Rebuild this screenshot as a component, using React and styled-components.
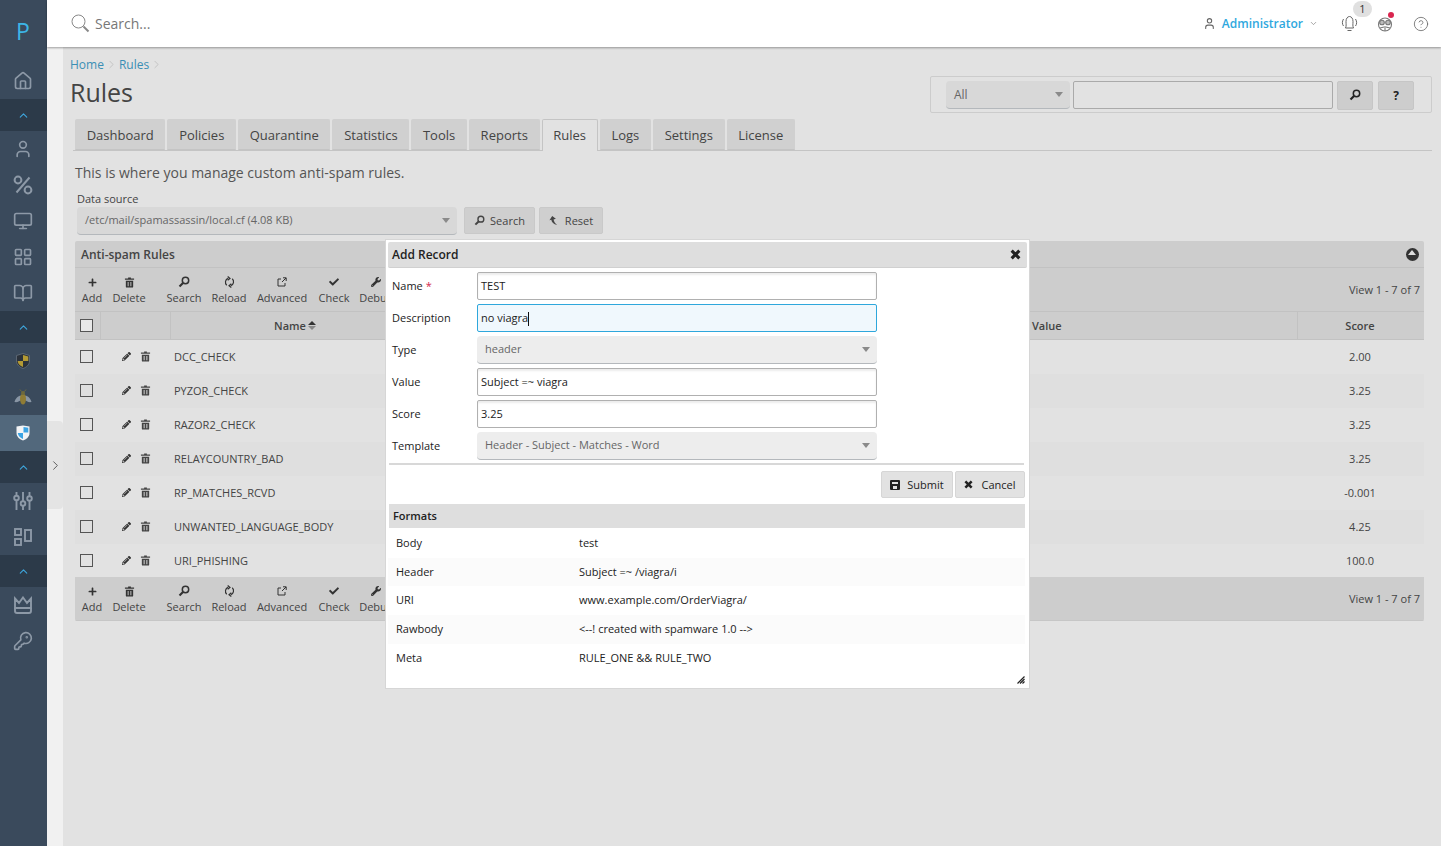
import React from "react";
import styled, { createGlobalStyle } from "styled-components";
import { Home, User, Monitor, LayoutGrid, BookOpen, KeyRound, ChevronUp, ChevronRight, ChevronDown, CircleHelp } from "lucide-react";
import { FaPlus, FaCheck, FaWrench, FaPencilAlt } from "react-icons/fa";

const GlobalStyle = createGlobalStyle`
  html, body { margin: 0; padding: 0; height: 100%; background: #e2e2e2; }
  body { font-family: "Open Sans", sans-serif; font-size: 11px; color: #333; overflow: hidden; }
  * { box-sizing: border-box; }
`;

const Page = styled.div`
  display: grid;
  grid-template-columns: 47px 16px 1fr;
  grid-template-rows: 47px 1fr;
  width: 1441px;
  height: 846px;
  position: relative;
  overflow: hidden;
`;

const Sidebar = styled.nav`
  grid-row: 1 / 3;
  background: #3a4a5c;
  display: flex;
  flex-direction: column;
`;

const Logo = styled.div`
  height: 63px;
  padding-top: 15px;
  padding-right: 1px;
  text-align: center;
  font-size: 23px;
  line-height: 32px;
  color: #3cb5e6;
`;

const SideItem = styled.div`
  height: 36px;
  padding-right: 1px;
  display: flex;
  align-items: center;
  justify-content: center;
  color: #8d99a7;
  background: ${(p) => (p.$active ? "#52687c" : "transparent")};
`;

const SideBand = styled.div`
  height: 32px;
  padding-right: 1px;
  display: flex;
  align-items: center;
  justify-content: center;
  background: #2c3a49;
  color: #3ea6dc;
`;

const TopBar = styled.header`
  grid-column: 2 / 4;
  background: #fff;
  box-shadow: 0 1px 2px rgba(0, 0, 0, 0.35);
  display: flex;
  align-items: center;
  padding: 0 12px 0 24px;
  z-index: 2;
`;

const SearchHint = styled.span`
  margin-left: 5px;
  font-size: 14px;
  color: #777;
  flex: 1;
`;

const UserLink = styled.span`
  display: flex;
  align-items: center;
  gap: 6px;
  margin-right: 23px;
  font-size: 12px;
  font-weight: 600;
  color: #2fa8de;
  & > svg:first-child { color: #666; }
  & > svg:last-child { color: #888; }
`;

const HeadIcon = styled.span`
  position: relative;
  display: flex;
  margin-left: ${(p) => p.$gap || 0}px;
  color: #666;
`;

const CountBadge = styled.span`
  position: absolute;
  left: 12px;
  top: -14px;
  width: 19px;
  height: 16px;
  border-radius: 8px;
  background: #e0e0e0;
  color: #333;
  font-size: 11px;
  line-height: 16px;
  text-align: center;
`;

const RedDot = styled.span`
  position: absolute;
  right: -1px;
  top: -4px;
  width: 6px;
  height: 6px;
  border-radius: 50%;
  background: #d9264f;
`;

const Rail = styled.div`
  background: #f1f1f1;
  padding-top: 374px;
`;

const RailTab = styled.div`
  height: 88px;
  background: #e4e4e4;
  border-radius: 0 4px 4px 0;
  display: flex;
  align-items: center;
  justify-content: center;
  color: #555;
`;

const Main = styled.main`
  background: #e2e2e2;
  padding: 9px 9px 0 7px;
  min-width: 0;
`;

const Crumbs = styled.div`
  display: flex;
  align-items: center;
  gap: 1px;
  height: 17px;
  font-size: 12px;
  color: #3a8fb5;
  & svg { color: #aaa; }
`;

const TitleRow = styled.div`
  display: flex;
  justify-content: space-between;
  align-items: flex-start;
  height: 43px;
  margin-top: 3px;
`;

const Title = styled.h1`
  margin: -1px 0 0;
  font-size: 25px;
  font-weight: 400;
  line-height: 34px;
  color: #444;
`;

const FilterBox = styled.div`
  display: flex;
  align-items: center;
  width: 502px;
  height: 37px;
  padding: 1px 0 0 15px;
  border: 1px solid #ccc;
  border-radius: 2px;
`;

const Select = styled.div`
  position: relative;
  width: ${(p) => p.$w}px;
  height: 28px;
  padding-left: ${(p) => p.$pad || 8}px;
  border-radius: 4px;
  background: ${(p) => p.$bg || "#d8d8d8"};
  border-bottom: 1px solid #b4b8bc;
  font-size: ${(p) => p.$size || 11}px;
  line-height: ${(p) => p.$lh || 26}px;
  color: #666;
  &::after {
    content: "";
    position: absolute;
    right: 7px;
    top: 11px;
    border: 4px solid transparent;
    border-top: 5px solid #8a8a8a;
  }
`;

const FilterInput = styled.div`
  width: 260px;
  height: 28px;
  margin: 0 4px 0 3px;
  border: 1px solid #aaa;
  border-radius: 2px;
  background: #e2e2e2;
`;

const SquareButton = styled.div`
  width: 36px;
  height: 29px;
  margin-left: ${(p) => p.$gap || 0}px;
  display: flex;
  align-items: center;
  justify-content: center;
  border-radius: 2px;
  background: #cdcdcd;
  border: 1px solid #c6c6c6;
  color: #222;
  font-size: 12px;
  font-weight: 700;
`;

const Tabs = styled.div`
  display: flex;
  gap: 2px;
  height: 32px;
  margin-left: 3px;
  padding-left: 2px;
  border-bottom: 1px solid #c4c4c4;
`;

const Tab = styled.div`
  height: ${(p) => (p.$active ? 32 : 31)}px;
  padding: 0 10.7px;
  border-radius: 2px 2px 0 0;
  background: ${(p) => (p.$active ? "#e2e2e2" : "#d0d0d0")};
  border: 1px solid ${(p) => (p.$active ? "#c4c4c4" : "#d0d0d0")};
  border-bottom: ${(p) => (p.$active ? "none" : "1px solid #c4c4c4")};
  font-size: 13px;
  line-height: 31px;
  color: #444;
`;

const Intro = styled.p`
  margin: 12px 0 0 5px;
  font-size: 14px;
  line-height: 20px;
  color: #555;
`;

const FieldLabel = styled.div`
  margin: 8px 0 0 7px;
  font-size: 11px;
  line-height: 15px;
  color: #444;
`;

const SourceRow = styled.div`
  display: flex;
  align-items: center;
  margin: 0 0 6px 7px;
  height: 29px;
`;

const PlainButton = styled.div`
  display: flex;
  align-items: center;
  justify-content: center;
  gap: ${(p) => p.$iconGap || 5}px;
  width: ${(p) => p.$w}px;
  height: 27px;
  margin-left: ${(p) => p.$gap || 0}px;
  border-radius: 2px;
  background: ${(p) => p.$bg || "#cfcfcf"};
  border: 1px solid ${(p) => p.$line || "#c9c9c9"};
  font-size: 11px;
  color: ${(p) => p.$color || "#444"};
`;

const Panel = styled.section`
  width: 1349px;
  margin-left: 5px;
  border-radius: 2px;
  background: #e2e2e2;
  overflow: hidden;
`;

const PanelTitle = styled.div`
  display: flex;
  align-items: center;
  justify-content: space-between;
  height: 27px;
  padding: 0 5px 0 6px;
  background: #cdcdcd;
  border-bottom: 1px solid #c2c2c2;
  font-size: 12px;
  font-weight: 600;
  color: #444;
`;

const CollapseDot = styled.span`
  width: 13px;
  height: 13px;
  border-radius: 50%;
  background: #333;
  position: relative;
  &::after {
    content: "";
    position: absolute;
    left: 2px;
    top: 2px;
    border: 4.5px solid transparent;
    border-top: 0;
    border-bottom: 5px solid #ddd;
  }
`;

const Toolbar = styled.div`
  display: flex;
  align-items: center;
  height: 44px;
  padding-left: 2px;
  background: #cdcdcd;
  border-bottom: 1px solid ${(p) => (p.$bottom ? "#c6c6c6" : "#c2c2c2")};
`;

const ToolButton = styled.div`
  width: ${(p) => p.$w}px;
  margin-left: ${(p) => p.$gap || 0}px;
  margin-top: 2px;
  display: flex;
  flex-direction: column;
  align-items: center;
  gap: 3px;
  font-size: 11px;
  line-height: 14px;
  color: #444;
  white-space: nowrap;
`;

const ToolIcon = styled.span`
  display: flex;
  align-items: center;
  justify-content: center;
  height: 12px;
  color: #333;
`;

const PageInfo = styled.span`
  margin-left: auto;
  padding-right: 4px;
  font-size: 11px;
  color: #444;
`;

const Grid = styled.div`
  display: grid;
  grid-template-columns: 26px 70px 248px 609px 270px 126px;
  height: ${(p) => p.$h}px;
  padding-bottom: ${(p) => (p.$head ? 0 : p.$h === 33 ? 1 : 2)}px;
  background: ${(p) => (p.$head ? "#cdcdcd" : p.$odd ? "#dfdfdf" : "#e2e2e2")};
  border-bottom: ${(p) => (p.$head ? "1px solid #c2c2c2" : "none")};
`;

const Cell = styled.div`
  display: flex;
  align-items: center;
  justify-content: ${(p) => p.$align || "flex-start"};
  gap: ${(p) => p.$iconGap || 0}px;
  padding: ${(p) => p.$pad || "0"};
  border-right: ${(p) => (p.$line ? "1px solid #c2c2c2" : "none")};
  font-size: 11px;
  font-weight: ${(p) => (p.$head ? 600 : 400)};
  color: #444;
`;

const SortMark = styled.span`
  display: inline-flex;
  flex-direction: column;
  gap: 1px;
  margin-left: 2px;
  &::before, &::after {
    content: "";
    border: 4px solid transparent;
  }
  &::before { border-top: 0; border-bottom: 4px solid #333; }
  &::after { border-bottom: 0; border-top: 4px solid #888; }
`;

const Check = styled.span`
  width: 13px;
  height: 13px;
  margin-left: 5px;
  border: 1px solid #555;
  background: ${(p) => (p.$fill ? "#e8e8e8" : "transparent")};
`;

const Modal = styled.div`
  position: absolute;
  left: 385px;
  top: 239px;
  width: 645px;
  height: 450px;
  padding: 2px;
  background: #fff;
  border: 1px solid #d6d6d6;
`;

const ModalTitle = styled.div`
  display: flex;
  align-items: center;
  justify-content: space-between;
  height: 26px;
  padding: 0 6px 0 4px;
  border-radius: 2px;
  background: #dedede;
  border-bottom: 1px solid #d0d0d0;
  font-size: 12px;
  font-weight: 600;
  color: #222;
`;

const FormBody = styled.div`
  display: flex;
  flex-direction: column;
  gap: 4px;
  padding: 4px 0 0 4px;
`;

const FormRow = styled.div`
  display: flex;
  align-items: center;
  height: 28px;
`;

const FormLabel = styled.label`
  width: 85px;
  padding-bottom: 2px;
  font-size: 11px;
  color: #222;
  & em { font-style: normal; color: #d2274f; }
`;

const TextBox = styled.div`
  width: 400px;
  height: 28px;
  padding: 0 3px;
  border: 1px solid ${(p) => (p.$focus ? "#2ea7dc" : "#b0b0b0")};
  border-radius: 2px;
  background: ${(p) => (p.$focus ? "#f0f8fd" : "#fff")};
  box-shadow: inset 0 2px 2px rgba(0, 0, 0, ${(p) => (p.$focus ? 0 : 0.08)});
  font-size: 11px;
  line-height: 26px;
  color: #222;
`;

const Caret = styled.span`
  display: inline-block;
  width: 1px;
  height: 14px;
  vertical-align: middle;
  background: #111;
`;

const Divider = styled.div`
  height: 2px;
  margin: 3px 3px 0 1px;
  background: #d8d8d8;
`;

const ModalActions = styled.div`
  display: flex;
  justify-content: flex-end;
  gap: 2px;
  margin-top: 6px;
  padding-right: 2px;
`;

const FormatsHead = styled.div`
  height: 24px;
  margin: 6px 2px 1px 1px;
  padding-left: 4px;
  background: #dedede;
  font-size: 11px;
  font-weight: 600;
  line-height: 24px;
  color: #222;
`;

const FormatRow = styled.div`
  display: grid;
  grid-template-columns: 191px 1fr;
  height: 28.7px;
  margin-right: 2px;
  background: ${(p) => (p.$alt ? "#fbfbfb" : "#fff")};
  font-size: 11px;
  line-height: 28.7px;
  color: #222;
  & > span:first-child { padding-left: 8px; }
`;

const Resizer = styled.svg`
  position: absolute;
  right: 4px;
  bottom: 4px;
`;

// small glyphs that the icon packages don't have in this shape
const Glass = ({ size = 12 }) => (
  <svg width={size} height={size} viewBox="0 0 12 12" fill="none" stroke="currentColor">
    <circle cx="7.5" cy="4.5" r="3.2" strokeWidth="1.5" />
    <path d="M5 7 L1.5 10.5" strokeWidth="2.2" />
  </svg>
);

const HeaderGlass = () => (
  <svg width="19" height="19" viewBox="0 0 19 19" fill="none" stroke="#888">
    <circle cx="7.5" cy="7.5" r="6.5" strokeWidth="1" />
    <path d="M12.5 12.5 L17.5 17.5" strokeWidth="2" />
  </svg>
);

const Trash = ({ size = 11 }) => (
  <svg width={size} height={size} viewBox="0 0 12 12" fill="currentColor">
    <path d="M4.5 0.5h3v1h3.5v1.5h-10v-1.5h3.5zM2 4h8v6.5a1 1 0 0 1-1 1h-6a1 1 0 0 1-1-1zM4 5.5v4.5h1v-4.5zM7 5.5v4.5h1v-4.5z" />
  </svg>
);

const Reload = () => (
  <svg width="11" height="12" viewBox="0 0 12 13" fill="none" stroke="currentColor" strokeWidth="1.3">
    <path d="M3 10 A4.5 4.5 0 0 1 4.5 2.5 M9 3 A4.5 4.5 0 0 1 7.5 10.5" />
    <path d="M4 0.5 L6.5 2.6 L4 4.5 M8 8.5 L5.5 10.5 L8 12.5" />
  </svg>
);

const External = () => (
  <svg width="10" height="10" viewBox="0 0 10 10" fill="none" stroke="currentColor" strokeWidth="1">
    <path d="M4 2H1v7h7V6M5 5l4-4M6 0.8h3.2V4" />
  </svg>
);

const UndoArrow = () => (
  <svg width="11" height="11" viewBox="0 0 12 12" fill="currentColor">
    <path d="M3.5 1 L7.5 4.2 L5 4.8 C5.5 7 6.5 9 9 11 C5 10.5 2.8 8 2.5 5.3 L0.5 5.7z" />
  </svg>
);

const Disk = () => (
  <svg width="10" height="10" viewBox="0 0 10 10" fill="currentColor">
    <path fillRule="evenodd" d="M1 0h8a1 1 0 0 1 1 1v8a1 1 0 0 1-1 1H1a1 1 0 0 1-1-1V1a1 1 0 0 1 1-1zM2 2v2h6V2zM3 6v3h4V6z" />
  </svg>
);

const HeavyX = ({ size = 10 }) => (
  <svg width={size} height={size} viewBox="0 0 10 10" stroke="currentColor" strokeWidth="2.8">
    <path d="M1.5 1.5 L8.5 8.5 M8.5 1.5 L1.5 8.5" />
  </svg>
);

const PercentMark = () => (
  <svg width="20" height="20" viewBox="0 0 20 20" fill="none" stroke="currentColor" strokeWidth="2">
    <circle cx="5" cy="5" r="3.4" />
    <circle cx="15" cy="15" r="3.4" />
    <path d="M16.5 2.5 L3.5 17.5" />
  </svg>
);

const CrownMark = () => (
  <svg width="20" height="18" viewBox="0 0 20 18" fill="none" stroke="currentColor" strokeWidth="1.9">
    <path d="M2 2.5 L6 7 L10 1.5 L14 7 L18 2.5 V12 H2z" />
    <path d="M2 12 V15 Q2 17 4 17 H16 Q18 17 18 15 V12" />
  </svg>
);

const SlidersRings = () => (
  <svg width="20" height="20" viewBox="0 0 20 20" fill="none" stroke="currentColor" strokeWidth="1.9">
    <path d="M3.5 1v3.5M3.5 9.5V19M10 1v9M10 15v4M16.5 1v4M16.5 10v9" />
    <circle cx="3.5" cy="7" r="2.3" />
    <circle cx="10" cy="12.5" r="2.3" />
    <circle cx="16.5" cy="7.5" r="2.3" />
  </svg>
);

const Widgets = () => (
  <svg width="18" height="18" viewBox="0 0 18 18" fill="none" stroke="currentColor" strokeWidth="1.9">
    <rect x="1" y="1" width="6" height="6" />
    <rect x="1" y="11" width="6" height="6" />
    <rect x="11" y="2" width="6" height="11" />
  </svg>
);

const DarkShield = () => (
  <svg width="14" height="16" viewBox="0 0 14 16">
    <path d="M7 0.5 L13.5 2.5 V8 C13.5 12 10 14.5 7 15.5 C4 14.5 0.5 12 0.5 8 V2.5z" fill="#2b323b" stroke="#66717d" strokeWidth="0.8" />
    <path d="M7 2 L12.3 3.5 V8 H7z M7 8 V14 C4.5 13 1.7 11 1.7 8z" fill="#b39a34" />
  </svg>
);

const Bee = () => (
  <svg width="18" height="17" viewBox="0 0 18 17">
    <path d="M8 7 C5 6 1.5 9 0.5 13 C3 13.5 6 12.5 8 10z M10 7 C13 6 16.5 9 17.5 13 C15 13.5 12 12.5 10 10z" fill="#8996a5" />
    <ellipse cx="9" cy="10" rx="3" ry="5.5" fill="#8f7c35" />
    <circle cx="9" cy="4" r="2" fill="#6e6a3c" />
    <path d="M7.5 2.5 L6 0.5 M10.5 2.5 L12 0.5" stroke="#6e6a3c" />
  </svg>
);

const BlueShield = () => (
  <svg width="14" height="16" viewBox="0 0 14 16">
    <path d="M7 0.5 L13.5 1.5 V8 C13.5 12 10 14.5 7 15.5 C4 14.5 0.5 12 0.5 8 V1.5z" fill="#f2f4f6" />
    <path d="M7.5 2 L12.3 2.7 V7.5 H7.5z M7 8 V14 C4.5 13 2 11 1.8 8z" fill="#3ba3e3" />
  </svg>
);

const RingingBell = () => (
  <svg width="17" height="17" viewBox="0 0 17 17" fill="none" stroke="currentColor" strokeWidth="1">
    <path d="M4.5 13 C5.5 11 5 9 5 6.5 C5 3.5 6.5 1.5 8.5 1.5 C10.5 1.5 12 3.5 12 6.5 C12 9 11.5 11 12.5 13z" />
    <path d="M6.5 15.5h4" />
    <path d="M2.5 4 C1 6.5 1 9 2.5 11 M14.5 4 C16 6.5 16 9 14.5 11" />
  </svg>
);

const Mascot = () => (
  <svg width="16" height="16" viewBox="0 0 16 16" fill="none" stroke="#777" strokeWidth="1.1">
    <circle cx="8" cy="8.5" r="6.5" />
    <circle cx="5" cy="6.5" r="2.3" fill="#bbb" />
    <circle cx="11" cy="6.5" r="2.3" fill="#bbb" />
    <path d="M8 10v5M3 12l4-1M13 12l-4-1" />
  </svg>
);

const tabs = ["Dashboard", "Policies", "Quarantine", "Statistics", "Tools", "Reports", "Rules", "Logs", "Settings", "License"];

const rules = [
  { name: "DCC_CHECK", score: "2.00" },
  { name: "PYZOR_CHECK", score: "3.25" },
  { name: "RAZOR2_CHECK", score: "3.25" },
  { name: "RELAYCOUNTRY_BAD", score: "3.25" },
  { name: "RP_MATCHES_RCVD", score: "-0.001" },
  { name: "UNWANTED_LANGUAGE_BODY", score: "4.25" },
  { name: "URI_PHISHING", score: "100.0" },
];

const formats = [
  ["Body", "test"],
  ["Header", "Subject =~ /viagra/i"],
  ["URI", "www.example.com/OrderViagra/"],
  ["Rawbody", "<--! created with spamware 1.0 -->"],
  ["Meta", "RULE_ONE && RULE_TWO"],
];

const ToolButtons = () => (
  <>
    <ToolButton $w={30}><ToolIcon><FaPlus size={9} /></ToolIcon>Add</ToolButton>
    <ToolButton $w={44}><ToolIcon><Trash /></ToolIcon>Delete</ToolButton>
    <ToolButton $w={44} $gap={11}><ToolIcon><Glass /></ToolIcon>Search</ToolButton>
    <ToolButton $w={46}><ToolIcon><Reload /></ToolIcon>Reload</ToolButton>
    <ToolButton $w={60}><ToolIcon><External /></ToolIcon>Advanced</ToolButton>
    <ToolButton $w={44}><ToolIcon><FaCheck size={10} /></ToolIcon>Check</ToolButton>
    <ToolButton $w={40}><ToolIcon><FaWrench size={10} /></ToolIcon>Debug</ToolButton>
  </>
);

const App = () => {
  return (
    <Page>
      <GlobalStyle />
      <Sidebar>
        <Logo>P</Logo>
        <SideItem><Home size={20} strokeWidth={2} /></SideItem>
        <SideBand><ChevronUp size={13} /></SideBand>
        <SideItem><User size={20} strokeWidth={2} /></SideItem>
        <SideItem><PercentMark /></SideItem>
        <SideItem><Monitor size={20} strokeWidth={2} /></SideItem>
        <SideItem><LayoutGrid size={20} strokeWidth={2} /></SideItem>
        <SideItem><BookOpen size={20} strokeWidth={2} /></SideItem>
        <SideBand><ChevronUp size={13} /></SideBand>
        <SideItem><DarkShield /></SideItem>
        <SideItem><Bee /></SideItem>
        <SideItem $active><BlueShield /></SideItem>
        <SideBand><ChevronUp size={13} /></SideBand>
        <SideItem><SlidersRings /></SideItem>
        <SideItem><Widgets /></SideItem>
        <SideBand><ChevronUp size={13} /></SideBand>
        <SideItem><CrownMark /></SideItem>
        <SideItem><KeyRound size={20} strokeWidth={2} /></SideItem>
      </Sidebar>

      <TopBar>
        <HeaderGlass />
        <SearchHint>Search...</SearchHint>
        <UserLink>
          <User size={13} />
          Administrator
          <ChevronDown size={9} />
        </UserLink>
        <HeadIcon>
          <CountBadge>1</CountBadge>
          <RingingBell />
        </HeadIcon>
        <HeadIcon $gap={19}>
          <Mascot />
          <RedDot />
        </HeadIcon>
        <HeadIcon $gap={20}>
          <CircleHelp size={16} strokeWidth={1.2} />
        </HeadIcon>
      </TopBar>

      <Rail>
        <RailTab><ChevronRight size={15} strokeWidth={1.5} /></RailTab>
      </Rail>

      <Main>
        <Crumbs>
          Home <ChevronRight size={13} strokeWidth={1} /> Rules <ChevronRight size={13} strokeWidth={1} />
        </Crumbs>
        <TitleRow>
          <Title>Rules</Title>
          <FilterBox>
            <Select $w={124} $size={12} $lh={28}>All</Select>
            <FilterInput />
            <SquareButton><Glass /></SquareButton>
            <SquareButton $gap={5}>?</SquareButton>
          </FilterBox>
        </TitleRow>
        <Tabs>
          {tabs.map((t) => (
            <Tab key={t} $active={t === "Rules"}>{t}</Tab>
          ))}
        </Tabs>
        <Intro>This is where you manage custom anti-spam rules.</Intro>
        <FieldLabel>Data source</FieldLabel>
        <SourceRow>
          <Select $w={380}>/etc/mail/spamassassin/local.cf (4.08 KB)</Select>
          <PlainButton $w={71} $gap={7}><Glass size={11} /> Search</PlainButton>
          <PlainButton $w={64} $gap={4}><UndoArrow /> Reset</PlainButton>
        </SourceRow>

        <Panel>
          <PanelTitle>Anti-spam Rules <CollapseDot /></PanelTitle>
          <Toolbar>
            <ToolButtons />
            <PageInfo>View 1 - 7 of 7</PageInfo>
          </Toolbar>
          <Grid $head $h={28}>
            <Cell $line><Check $fill /></Cell>
            <Cell $line />
            <Cell $head $align="center">Name<SortMark /></Cell>
            <Cell $head />
            <Cell $head $line $pad="0 0 0 4px">Value</Cell>
            <Cell $head $align="center" $pad="0 2px 0 0">Score</Cell>
          </Grid>
          {rules.map((r, i) => (
            <Grid key={r.name} $h={i === 6 ? 33 : 34} $odd={i % 2 === 1}>
              <Cell><Check /></Cell>
              <Cell $align="center" $iconGap={9}>
                <FaPencilAlt size={9} color="#333" />
                <Trash />
              </Cell>
              <Cell $pad="0 0 0 3px">{r.name}</Cell>
              <Cell />
              <Cell />
              <Cell $align="center" $pad="0 2px 0 0">{r.score}</Cell>
            </Grid>
          ))}
          <Toolbar $bottom>
            <ToolButtons />
            <PageInfo>View 1 - 7 of 7</PageInfo>
          </Toolbar>
        </Panel>
      </Main>

      <Modal>
        <ModalTitle>Add Record <HeavyX size={11} /></ModalTitle>
        <FormBody>
          <FormRow><FormLabel>Name <em>*</em></FormLabel><TextBox>TEST</TextBox></FormRow>
          <FormRow><FormLabel>Description</FormLabel><TextBox $focus>no viagra<Caret /></TextBox></FormRow>
          <FormRow><FormLabel>Type</FormLabel><Select $w={400} $bg="#ededed">header</Select></FormRow>
          <FormRow><FormLabel>Value</FormLabel><TextBox>Subject =~ viagra</TextBox></FormRow>
          <FormRow><FormLabel>Score</FormLabel><TextBox>3.25</TextBox></FormRow>
          <FormRow><FormLabel>Template</FormLabel><Select $w={400} $bg="#ededed">Header - Subject - Matches - Word</Select></FormRow>
        </FormBody>
        <Divider />
        <ModalActions>
          <PlainButton $w={72} $iconGap={7} $bg="#e2e2e2" $line="#d6d6d6" $color="#222"><Disk /> Submit</PlainButton>
          <PlainButton $w={70} $iconGap={8} $bg="#e2e2e2" $line="#d6d6d6" $color="#222"><HeavyX size={9} /> Cancel</PlainButton>
        </ModalActions>
        <FormatsHead>Formats</FormatsHead>
        {formats.map(([k, v], i) => (
          <FormatRow key={k} $alt={i % 2 === 1}>
            <span>{k}</span>
            <span>{v}</span>
          </FormatRow>
        ))}
        <Resizer width="8" height="8" viewBox="0 0 8 8" stroke="#222" strokeWidth="1.2" fill="none">
          <path d="M0.5 7.5 L7.5 0.5 M3 7.5 L7.5 3 M5.5 7.5 L7.5 5.5" />
        </Resizer>
      </Modal>
    </Page>
  );
};

export default App;
